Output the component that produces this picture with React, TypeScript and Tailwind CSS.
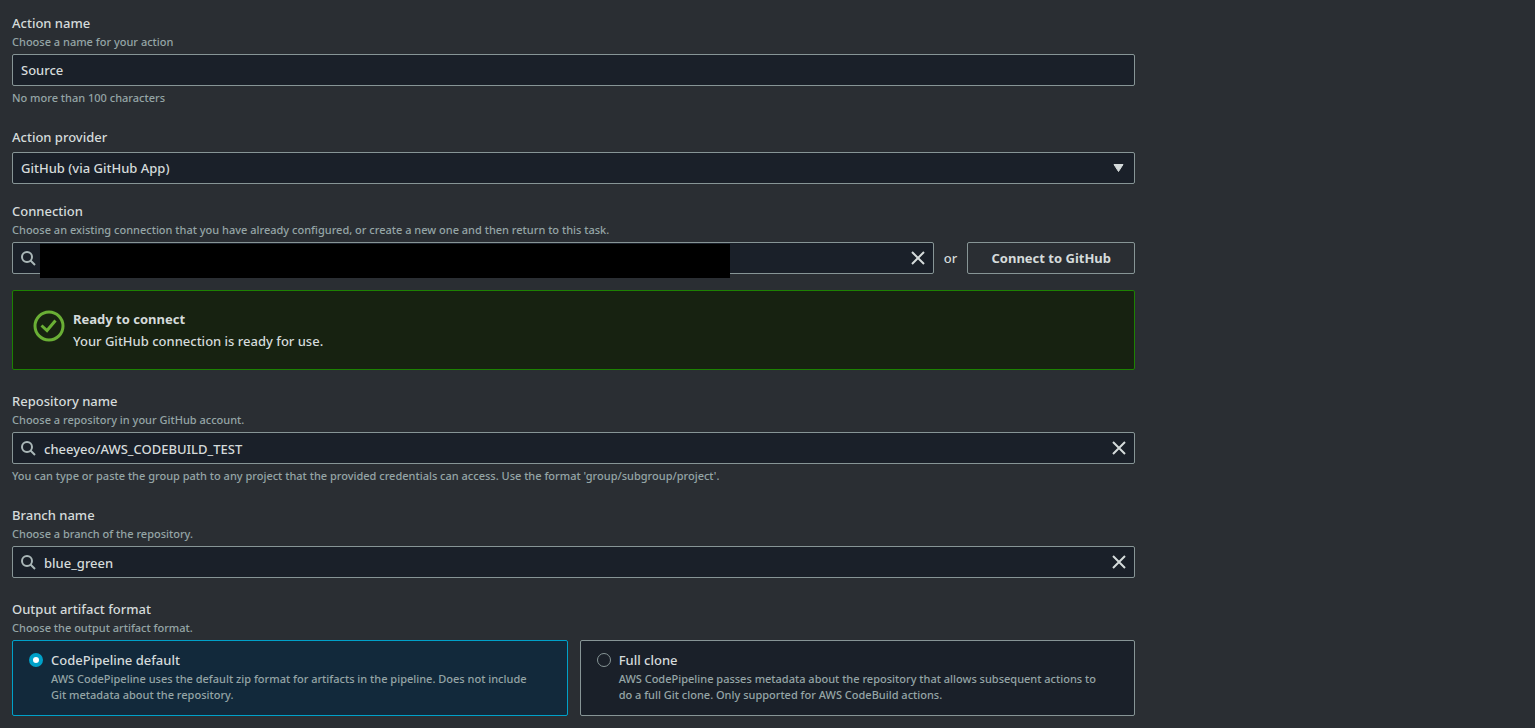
import { useState, type ReactNode } from "react";

type FieldProps = {
  id: string;
  label: string;
  description?: string;
  constraint?: string;
  children: ReactNode;
};
const Field = ({ id, label, description, constraint, children }: FieldProps) => {
  return (
    <div>
      <label htmlFor={id} className="block">
        {label}
      </label>
      {description && <p className="text-[11px] leading-4 text-[#95a5a6]">{description}</p>}
      <div className="mt-1">{children}</div>
      {constraint && (
        <p className="mt-1 text-[11px] leading-4 text-[#95a5a6]">{constraint}</p>
      )}
    </div>
  );
};

type SearchInputProps = {
  id: string;
  defaultValue: string;
  masked?: boolean;
};
const SearchInput = ({ id, defaultValue, masked }: SearchInputProps) => {
  const [value, setValue] = useState(defaultValue);
  return (
    <div className="relative flex h-8 flex-1 items-center rounded-xs border border-[#879596] bg-[#1a2029] px-[7px]">
      <svg viewBox="0 0 16 16" className="size-4 shrink-0 fill-none stroke-[#aab7b8] stroke-2">
        <circle cx="7" cy="7" r="5" />
        <path d="M10.5 10.5 15 15" />
      </svg>
      <input
        id={id}
        type="text"
        value={value}
        onChange={(e) => setValue(e.target.value)}
        className="h-full min-w-0 flex-1 px-2 pt-0.5 outline-none"
      />
      <button type="button" aria-label="Clear" onClick={() => setValue("")}>
        <svg viewBox="0 0 16 16" className="size-4 fill-none stroke-[#d5dbdb] stroke-2">
          <path d="M2 2 14 14M14 2 2 14" />
        </svg>
      </button>
      {masked && <div className="absolute top-px left-[27px] h-[34px] w-3/4 bg-black" />}
    </div>
  );
};

const formats = [
  {
    id: "default",
    title: "CodePipeline default",
    text: "AWS CodePipeline uses the default zip format for artifacts in the pipeline. Does not include Git metadata about the repository.",
  },
  {
    id: "clone",
    title: "Full clone",
    text: "AWS CodePipeline passes metadata about the repository that allows subsequent actions to do a full Git clone. Only supported for AWS CodeBuild actions.",
  },
];

const App = () => {
  const [format, setFormat] = useState("default");

  return (
    <div className="min-h-screen bg-[#2a2e33] font-['Noto_Sans',sans-serif] text-[13px] leading-[22px] font-medium text-[#d5dbdb]">
      <form className="flex w-3/4 flex-col gap-5 py-3 pr-4 pl-3">
        <Field
          id="action-name"
          label="Action name"
          description="Choose a name for your action"
          constraint="No more than 100 characters"
        >
          <input
            id="action-name"
            type="text"
            defaultValue="Source"
            className="block h-8 w-full rounded-xs border border-[#879596] bg-[#1a2029] px-2 outline-none"
          />
        </Field>

        <div className="flex flex-col gap-4">
          <Field id="provider" label="Action provider">
            <div className="relative">
              <select
                id="provider"
                className="block h-8 w-full appearance-none rounded-xs border border-[#879596] bg-[#1a2029] px-2 outline-none"
              >
                <option>GitHub (via GitHub App)</option>
              </select>
              <svg
                viewBox="0 0 16 16"
                className="pointer-events-none absolute top-2 right-2 size-4 fill-[#d5dbdb] stroke-[#d5dbdb]"
              >
                <path d="M3 4.5h9L7.5 11.5z" strokeLinejoin="round" />
              </svg>
            </div>
          </Field>

          <Field
            id="connection"
            label="Connection"
            description="Choose an existing connection that you have already configured, or create a new one and then return to this task."
          >
            <div className="flex items-center gap-2.5">
              <SearchInput id="connection" defaultValue="" masked />
              <span>or</span>
              <button
                type="button"
                className="h-8 w-[168px] rounded-xs border border-[#879596] font-bold"
              >
                Connect to GitHub
              </button>
            </div>
          </Field>

          <div className="flex gap-2 rounded-xs border border-[#1d8102] bg-[#172211] px-5 py-[17px]">
            <svg
              viewBox="0 0 32 32"
              className="mt-0.5 size-8 fill-none stroke-[#6aaf35] stroke-3"
            >
              <circle cx="16" cy="16" r="14" />
              <path d="M8.5 15.5 14 20.5 22.5 10.5" />
            </svg>
            <div>
              <p className="font-bold">Ready to connect</p>
              <p>Your GitHub connection is ready for use.</p>
            </div>
          </div>
        </div>

        <Field
          id="repository"
          label="Repository name"
          description="Choose a repository in your GitHub account."
          constraint="You can type or paste the group path to any project that the provided credentials can access. Use the format 'group/subgroup/project'."
        >
          <SearchInput id="repository" defaultValue="cheeyeo/AWS_CODEBUILD_TEST" />
        </Field>

        <Field
          id="branch"
          label="Branch name"
          description="Choose a branch of the repository."
        >
          <SearchInput id="branch" defaultValue="blue_green" />
        </Field>

        <fieldset>
          <legend>Output artifact format</legend>
          <p className="text-[11px] leading-4 text-[#95a5a6]">Choose the output artifact format.</p>
          <div className="mt-1 grid grid-cols-2 gap-3">
            {formats.map((f) => (
              <label
                key={f.id}
                className="flex gap-2 rounded-xs border border-[#879596] bg-[#1a2029] pt-2 pr-7 pb-3 pl-4 has-checked:border-[#00a1c9] has-checked:bg-[#12293b]"
              >
                <input
                  type="radio"
                  name="format"
                  value={f.id}
                  checked={format === f.id}
                  onChange={() => setFormat(f.id)}
                  className="mt-1 size-3.5 shrink-0 appearance-none rounded-full border border-[#879596] checked:border-4 checked:border-[#00a1c9] checked:bg-white"
                />
                <span>
                  <span className="block">{f.title}</span>
                  <span className="block text-[11px] leading-4 text-[#95a5a6]">{f.text}</span>
                </span>
              </label>
            ))}
          </div>
        </fieldset>
      </form>
    </div>
  );
};

export default App;
